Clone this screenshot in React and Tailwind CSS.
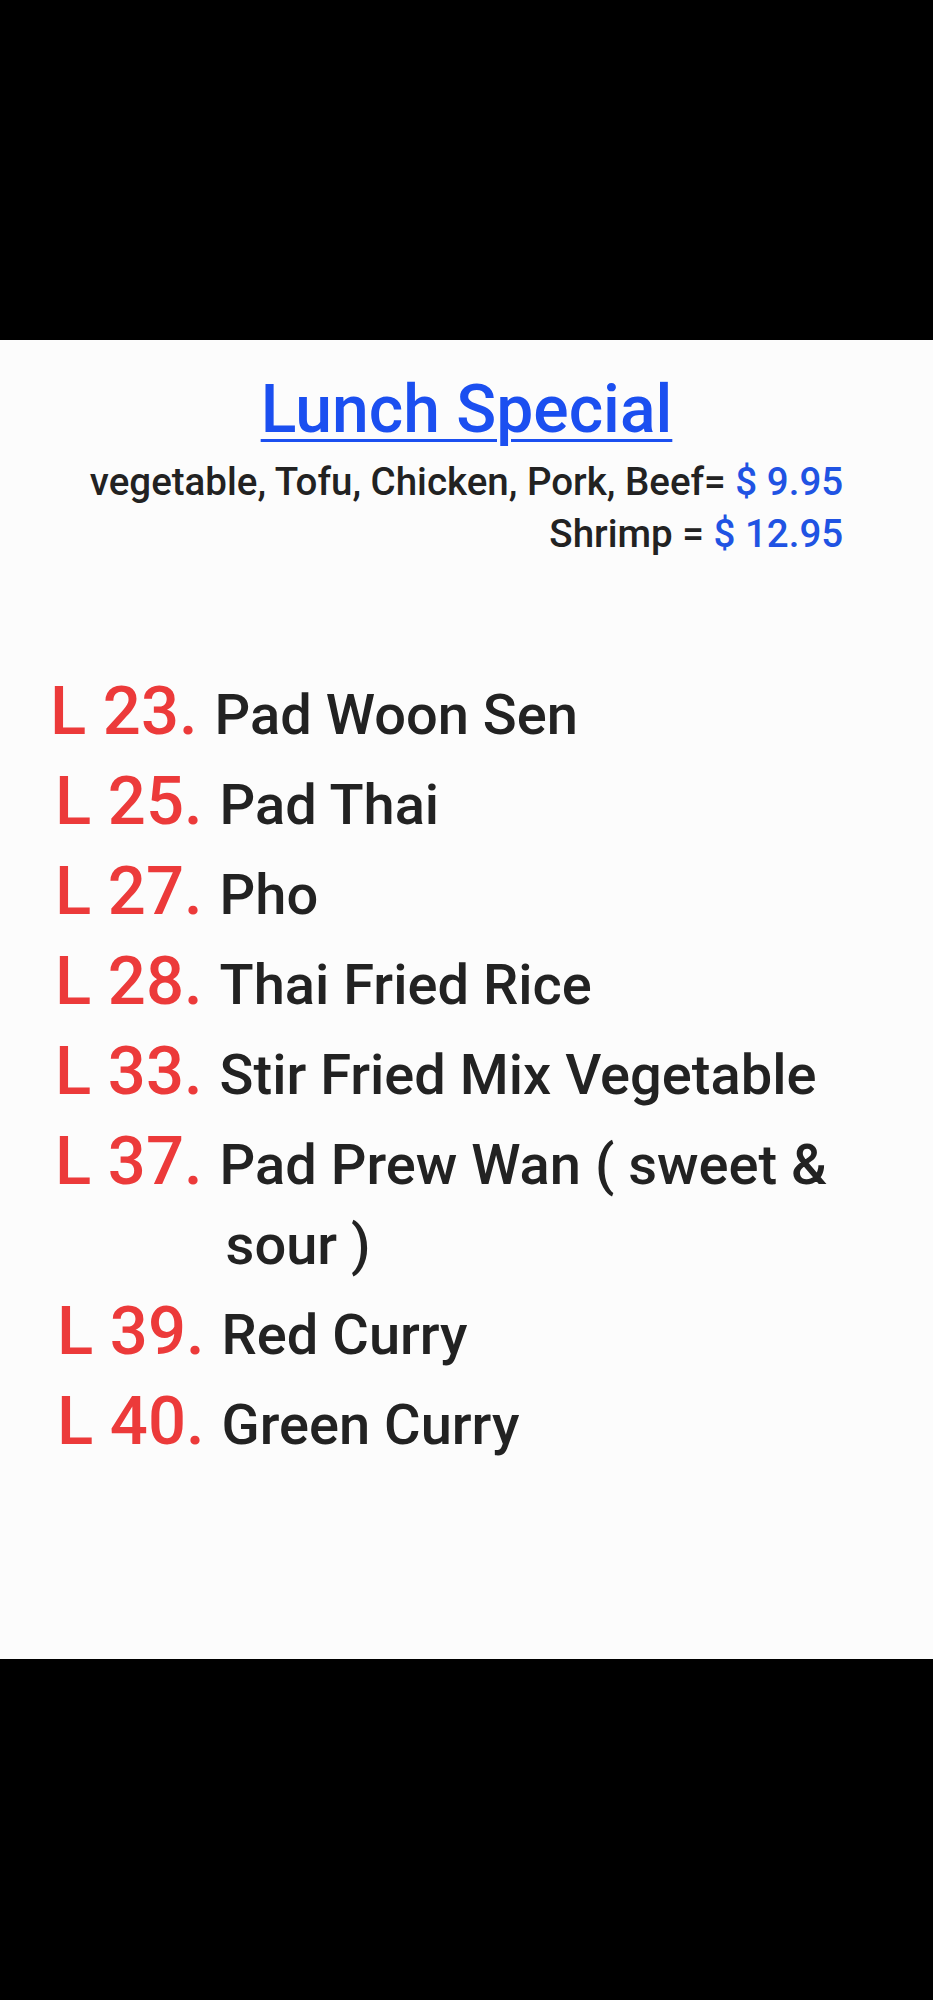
import React from "react";

const items = [
  { num: "L 23.", name: ["Pad Woon Sen"], pad: "pl-[50px]" },
  { num: "L 25.", name: ["Pad Thai"], pad: "pl-[55px]" },
  { num: "L 27.", name: ["Pho"], pad: "pl-[55px]" },
  { num: "L 28.", name: ["Thai Fried Rice"], pad: "pl-[55px]" },
  { num: "L 33.", name: ["Stir Fried Mix Vegetable"], pad: "pl-[55px]" },
  { num: "L 37.", name: ["Pad Prew Wan ( sweet &", "sour )"], pad: "pl-[55px]" },
  { num: "L 39.", name: ["Red Curry"], pad: "pl-[57px]" },
  { num: "L 40.", name: ["Green Curry"], pad: "pl-[57px]" },
];

export default function App() {
  return (
    <div className="w-full font-['Roboto',sans-serif] font-medium">
      <div className="h-[340px] bg-black" />
      <div className="h-[1319px] bg-[#fcfcfc] flex flex-col">
        <div className="pt-[30px] text-center">
          <span className="text-[66px] leading-[80px] text-[#1b4ff0] underline decoration-[3px] underline-offset-[7px]">
            Lunch Special
          </span>
        </div>
        <div className="mt-[6px] flex justify-center">
          <div className="text-right text-[38.5px] leading-[52px] text-[#222222]">
            <div>
              vegetable, Tofu, Chicken, Pork, Beef={" "}
              <span className="text-[#2053e3]">$ 9.95</span>
            </div>
            <div>
              Shrimp = <span className="text-[#2053e3]">$ 12.95</span>
            </div>
          </div>
        </div>
        <div className="mt-[111px] flex flex-col gap-[6px]">
          {items.map((it) => (
            <div key={it.num} className={`flex items-baseline ${it.pad}`}>
              <span className="text-[67px] leading-[80px] text-[#ec3a3a] whitespace-nowrap">
                {it.num}
              </span>
              <span className="ml-[17px] text-[56px] leading-[80px] text-[#222222]">
                {it.name.map((line, i) => (
                  <span key={i} className={i > 0 ? "block pl-[6px]" : "block"}>
                    {line}
                  </span>
                ))}
              </span>
            </div>
          ))}
        </div>
      </div>
      <div className="h-[341px] bg-black" />
    </div>
  );
}
